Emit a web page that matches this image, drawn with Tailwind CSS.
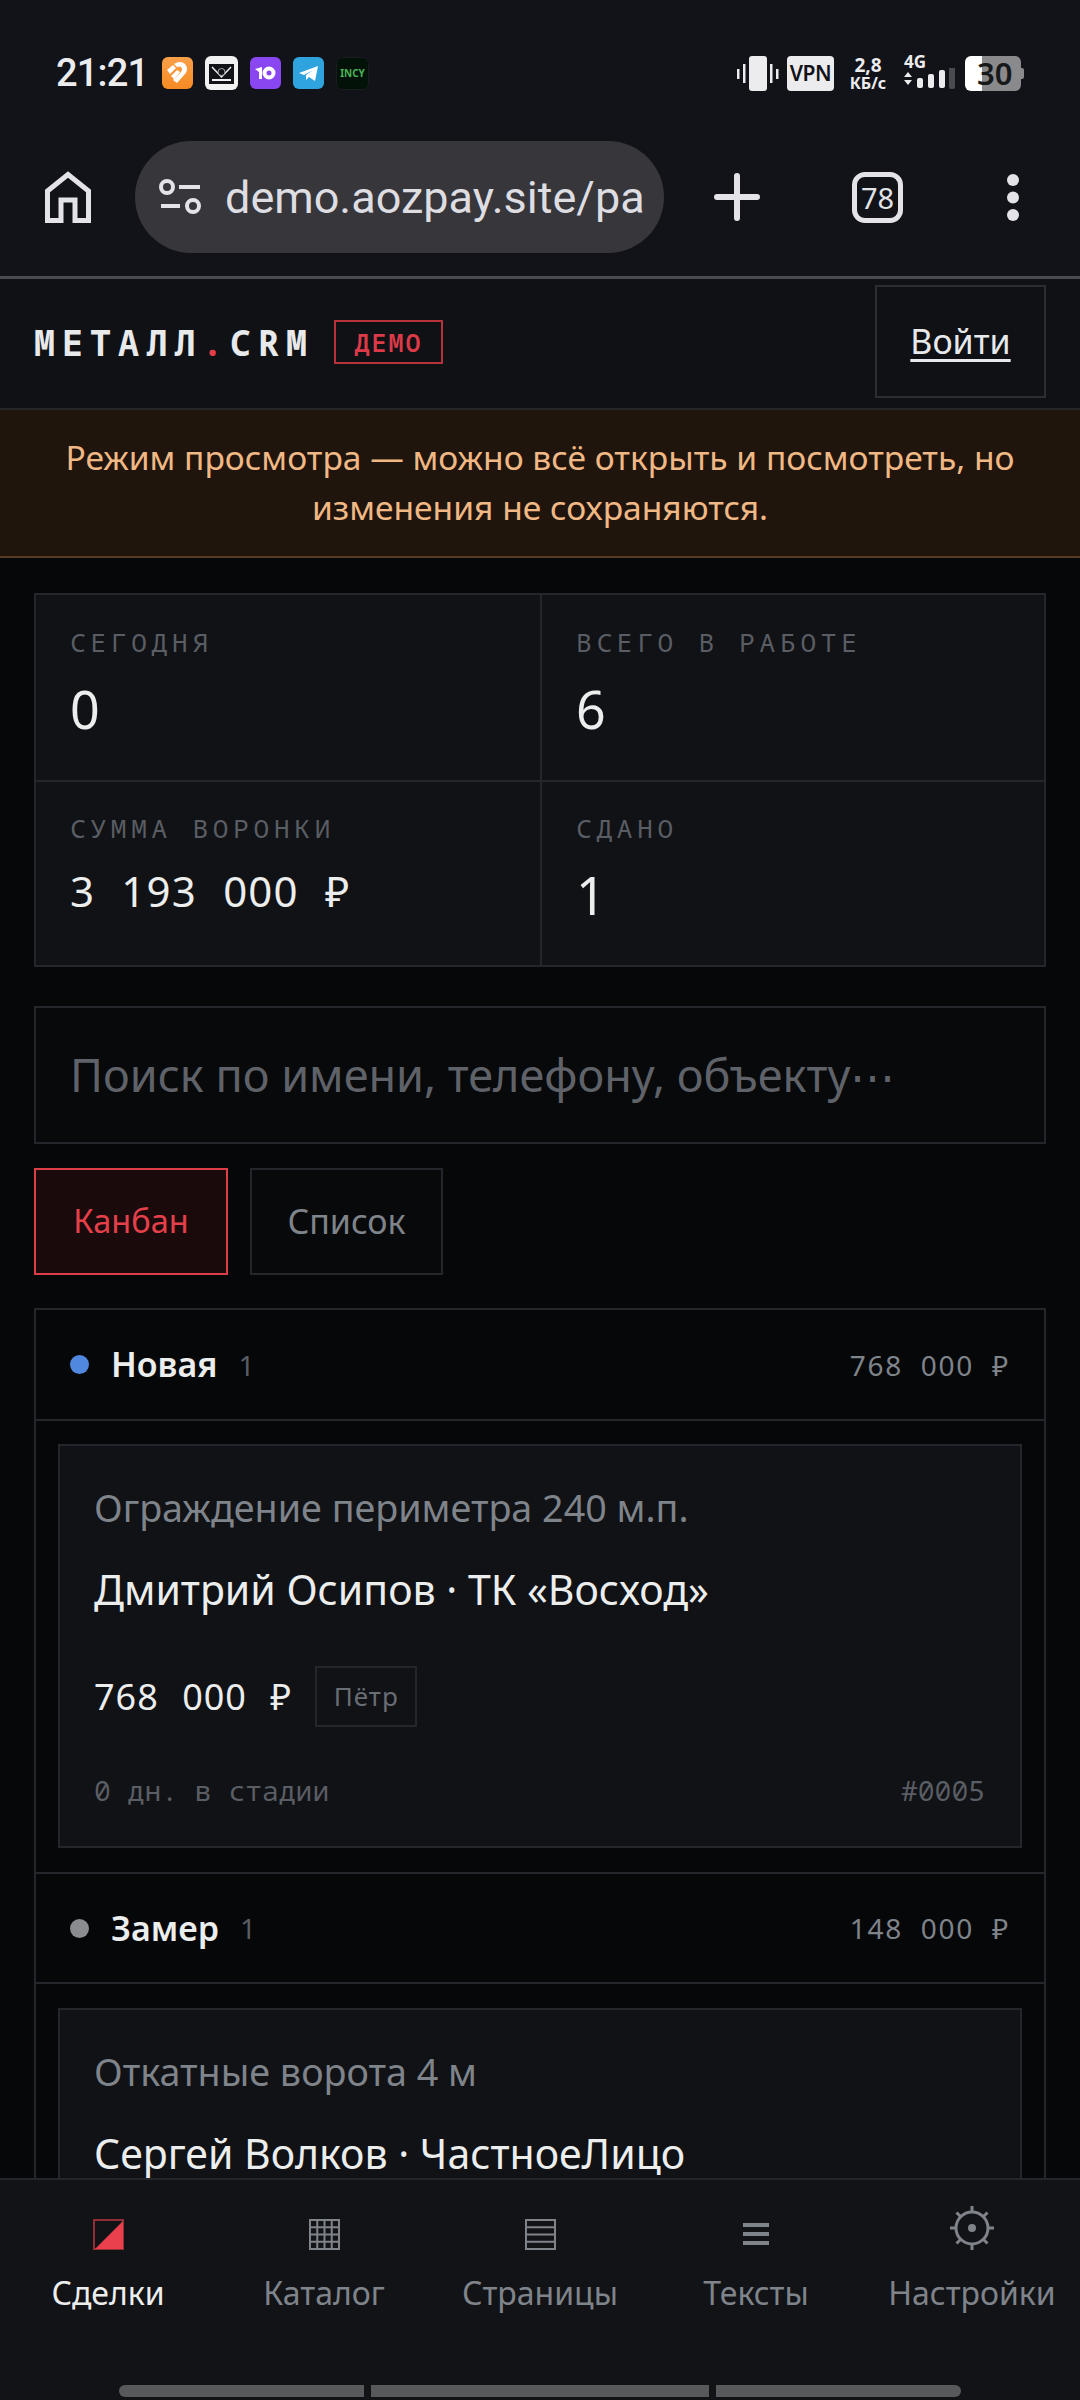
<!DOCTYPE html>
<html lang="ru">
<head>
<meta charset="utf-8">
<script src="https://cdn.jsdelivr.net/npm/@tailwindcss/browser@4"></script>
</head>
<body class="bg-[#060709]">
<div class="w-[1080px] h-[2400px] flex flex-col overflow-hidden bg-[#060709] font-['Noto_Sans',sans-serif] text-[#e8e9eb]">

  <!-- system + browser chrome -->
  <div class="h-[276px] shrink-0 bg-[#121319] pt-[55px]">
    <div class="h-[36px] flex items-center pl-[56px] pr-[56px] justify-between">
      <div class="flex items-center">
        <span class="font-['Roboto',sans-serif] font-medium text-[38px] leading-none tracking-[-0.8px] text-[#ececee] w-[106px]">21:21</span>
        <div class="flex items-center gap-[12px]">
          <svg class="w-[31px] h-[32px]" viewBox="0 0 31 32"><defs><linearGradient id="o" x1="0" y1="0" x2="0" y2="1"><stop offset="0" stop-color="#f9a04a"/><stop offset="1" stop-color="#f58a22"/></linearGradient></defs><rect width="31" height="32" rx="6" fill="url(#o)"/><path d="M5 13L11 8L14 11L8 17ZM12 7Q18 3 23 7Q27 12 23 17L15 26L11 23L19 15Q21 12 19 10Q17 9 15 10Z M9 19L15 13L18 15L12 22Z" fill="#fff"/></svg>
          <svg class="w-[33px] h-[34px]" viewBox="0 0 33 34"><rect width="33" height="34" rx="6" fill="#f1f1f1"/><path d="M4 8H29V28H4Z" fill="#121319"/><path d="M4 8H29L29 11H26L16.500 20L7 11H4Z" fill="#121319"/><path d="M7 11L16.500 21L26 11" fill="none" stroke="#f1f1f1" stroke-width="1.500"/><path d="M7 23H26V25H7Z" fill="#f1f1f1"/><circle cx="16.500" cy="16" r="3.500" fill="#121319" stroke="#aaa" stroke-width="1"/></svg>
          <svg class="w-[31px] h-[32px]" viewBox="0 0 31 32"><rect width="31" height="32" rx="6" fill="#8a46f0"/><path d="M5 12L12 10V22H9V15Z" fill="#fff"/><circle cx="19" cy="16" r="4.500" fill="none" stroke="#fff" stroke-width="4"/></svg>
          <svg class="w-[31px] h-[32px]" viewBox="0 0 31 32"><rect width="31" height="32" rx="6" fill="#2fa3de"/><path d="M6 16L25 9L22 24L16 20L13 23L13 18L20 13L11 18Z" fill="#fff"/></svg>
          <svg class="w-[33px] h-[33px]" viewBox="0 0 33 33"><rect x=".5" y=".5" width="32" height="32" rx="6" fill="#031209" stroke="#1a1d20"/><text x="16.500" y="20" text-anchor="middle" font-family="Noto Sans" font-weight="700" font-size="10" fill="#49b455">INCY</text></svg>
        </div>
      </div>
      <div class="flex items-center">
        <svg class="w-[42px] h-[35px]" viewBox="0 0 42 35"><rect x="12" width="18" height="35" rx="3" fill="#ececee"/><rect x="0" y="13" width="2.500" height="10" fill="#ececee"/><rect x="6" y="8" width="2.500" height="19" fill="#ececee"/><rect x="33" y="8" width="2.500" height="19" fill="#ececee"/><rect x="39" y="13" width="2.500" height="10" fill="#ececee"/></svg>
        <span class="ml-[8px] w-[47px] h-[35px] rounded-[4px] bg-[#ececee] text-[#121319] font-['Noto_Sans'] font-semibold text-[21px] tracking-[-0.5px] flex items-center justify-center leading-none">VPN</span>
        <div class="ml-[15px] w-[38px] flex flex-col items-center font-['Noto_Sans'] font-bold text-[#ececee] leading-none">
          <span class="text-[19px] leading-[20px]">2,8</span>
          <span class="text-[16px] leading-[17px] whitespace-nowrap">КБ/с</span>
        </div>
        <div class="ml-[17px] w-[52px] h-[38px] relative">
          <span class="block font-['Noto_Sans'] font-bold text-[17px] leading-[15px] text-[#ececee]">4G</span>
          <svg class="w-[52px] h-[24px] absolute left-0 top-[14px]" viewBox="0 0 52 24"><path d="M0 9L4 4L8 9ZM0 12H8L4 17Z" fill="#ececee"/><rect x="13" y="10" width="6" height="10" rx="2" fill="#ececee"/><rect x="24" y="6" width="6" height="14" rx="2" fill="#ececee"/><rect x="35" y="2" width="6" height="18" rx="2" fill="#ececee"/><rect x="45" y="-2" width="6" height="23" rx="2" fill="#4a4b50"/></svg>
        </div>
        <div class="ml-[9px] relative w-[59px] h-[35px] flex">
          <div class="w-[17px] h-full bg-white rounded-l-[6px]"></div>
          <div class="w-[39px] h-full bg-[#8a8a8c] rounded-r-[6px]"></div>
          <div class="w-[3px] h-[11px] my-auto bg-[#8a8a8c] rounded-r-[2px]"></div>
          <span class="absolute left-[12px] top-0 h-[35px] flex items-center font-['Noto_Sans'] font-semibold text-[31px] leading-none text-[#17181a]">30</span>
        </div>
      </div>
    </div>
    <div class="mt-[50px] h-[112px] flex items-center">
      <svg class="ml-[45px] w-[46px] h-[52px]" viewBox="0 0 46 52" fill="none" stroke="#e3e3e8" stroke-width="5"><path d="M2.500 49.500V20L23 3.500L43.500 20V49.500H30V29H16V49.500Z"/></svg>
      <div class="ml-[44px] w-[529px] h-[112px] rounded-full bg-[#36363b] flex items-center pl-[24px] overflow-hidden">
        <svg class="w-[43px] h-[36px] shrink-0" viewBox="0 0 43 36" fill="none" stroke="#e3e3e8" stroke-width="4"><circle cx="8" cy="8" r="6"/><path d="M20 8H41M2 27H21"/><circle cx="34" cy="27" r="6"/></svg>
        <span class="ml-[23px] font-['Roboto',sans-serif] text-[45px] leading-none text-[#dddde2] whitespace-nowrap">demo.aozpay.site/pa</span>
      </div>
      <svg class="ml-[50px] w-[46px] h-[48px]" viewBox="0 0 46 48" stroke="#e3e3e8" stroke-width="6" stroke-linecap="round"><path d="M23 3V45M3 24H43"/></svg>
      <div class="ml-[92px] w-[51px] h-[51px] rounded-[13px] border-[5px] border-[#e3e3e8] flex items-center justify-center text-[29px] leading-none text-[#e3e3e8]">78</div>
      <svg class="ml-[104px] w-[12px] h-[47px]" viewBox="0 0 12 47" fill="#e3e3e8"><circle cx="6" cy="6" r="6"/><circle cx="6" cy="23.500" r="6"/><circle cx="6" cy="41" r="6"/></svg>
    </div>
  </div>
  <div class="h-[3px] shrink-0 bg-[#4a4b50]"></div>

  <!-- app header -->
  <header class="h-[131px] shrink-0 bg-[#0f1115] border-b-2 border-[#24262a] flex items-center justify-between pl-[34px] pr-[34px]">
    <div class="flex items-center -mt-[3px]">
      <span class="font-['Noto_Sans_Mono','DejaVu_Sans_Mono',monospace] font-bold text-[35px] leading-none tracking-[7px] text-[#e8e9eb]">МЕТАЛЛ<span class="text-[#e5404a]">.</span>CRM</span>
      <span class="ml-[20px] w-[109px] h-[44px] border-2 border-[#b8323c] text-[#dc3a48] font-['Noto_Sans_Mono','DejaVu_Sans_Mono',monospace] font-semibold text-[25px] tracking-[2px] flex items-center justify-center leading-none">ДЕМО</span>
    </div>
    <a class="w-[171px] h-[113px] border-2 border-[#2a2d33] flex items-center justify-center text-[34px] underline underline-offset-[5px] text-[#e8e9eb] -mt-[4px]">Войти</a>
  </header>

  <!-- demo banner -->
  <div class="h-[148px] shrink-0 bg-[#20150d] border-b-2 border-[#5a3a20] flex items-center justify-center text-center px-[34px] text-[33.6px] leading-[50px] text-[#f0b884]">
    <p class="-mt-[2px]">Режим просмотра — можно всё открыть и посмотреть, но<br>изменения не сохраняются.</p>
  </div>

  <!-- page -->
  <main class="flex-1 min-h-0 overflow-hidden px-[34px] pt-[35px]">
    <section class="grid grid-cols-[506px_1fr] border-2 border-[#24262b] bg-[#101216] h-[374px]">
      <div class="border-r-2 border-b-2 border-[#24262b] pl-[34px] pt-[29px]">
        <div class="font-['Noto_Sans_Mono','DejaVu_Sans_Mono',monospace] text-[26px] tracking-[4.800px] leading-[36px] text-[#5a5d63]">СЕГОДНЯ</div>
        <div class="mt-[14px] text-[52px] leading-[70px] text-[#eceded]">0</div>
      </div>
      <div class="border-b-2 border-[#24262b] pl-[34px] pt-[29px]">
        <div class="font-['Noto_Sans_Mono','DejaVu_Sans_Mono',monospace] text-[26px] tracking-[4.800px] leading-[36px] text-[#5a5d63]">ВСЕГО В РАБОТЕ</div>
        <div class="mt-[14px] text-[52px] leading-[70px] text-[#eceded]">6</div>
      </div>
      <div class="border-r-2 border-[#24262b] pl-[34px] pt-[28px]">
        <div class="font-['Noto_Sans_Mono','DejaVu_Sans_Mono',monospace] text-[26px] tracking-[4.800px] leading-[36px] text-[#5a5d63]">СУММА ВОРОНКИ</div>
        <div class="mt-[13px] text-[42px] leading-[64px] text-[#eceded] [word-spacing:14px] tracking-[1.200px]">3 193 000 ₽</div>
      </div>
      <div class="pl-[34px] pt-[28px]">
        <div class="font-['Noto_Sans_Mono','DejaVu_Sans_Mono',monospace] text-[26px] tracking-[4.800px] leading-[36px] text-[#5a5d63]">СДАНО</div>
        <div class="mt-[14px] text-[52px] leading-[70px] text-[#eceded]">1</div>
      </div>
    </section>

    <div class="mt-[39px] h-[138px] border-2 border-[#24262b] bg-[#08090b] flex items-center pl-[34px] text-[45px] text-[#5f6268] whitespace-nowrap">Поиск по имени, телефону, объекту⋯</div>

    <div class="mt-[24px] flex gap-[22px]">
      <button class="w-[194px] h-[107px] border-2 border-[#dc3f48] bg-[#1a0a0c] text-[32.500px] text-[#e5404a]">Канбан</button>
      <button class="w-[193px] h-[107px] border-2 border-[#24262b] bg-[#08090b] text-[34px] text-[#7f838a]">Список</button>
    </div>

    <section class="mt-[33px] border-2 border-[#24262b] border-b-0">
      <div class="h-[111px] border-b-2 border-[#24262b] flex items-center justify-between pl-[34px] pr-[34px]">
        <div class="flex items-center">
          <span class="w-[19px] h-[19px] rounded-full bg-[#5088df]"></span>
          <span class="ml-[22px] text-[34px] font-semibold text-[#eceded]">Новая</span>
          <span class="ml-[21px] text-[28px] text-[#5a5d63]">1</span>
        </div>
        <span class="font-['Noto_Sans'] text-[28px] text-[#7f838a] [word-spacing:9px] tracking-[1.700px]">768 000 ₽</span>
      </div>
      <div class="px-[22px] pt-[23px] pb-[24px] border-b-2 border-[#24262b]">
        <article class="h-[404px] border-2 border-[#24262b] bg-[#101216] pl-[34px] pr-[35px] pt-[37px]">
          <div class="text-[37.700px] leading-[50px] text-[#7f838a]">Ограждение периметра 240 м.п.</div>
          <div class="mt-[31px] text-[41px] leading-[50px] text-[#eceded]">Дмитрий Осипов · ТК «Восход»</div>
          <div class="mt-[52px] flex items-center">
            <span class="text-[36px] text-[#eceded] [word-spacing:13px] tracking-[1px] leading-[61px]">768 000 ₽</span>
            <span class="ml-[23px] w-[102px] h-[61px] border-2 border-[#24262b] flex items-center justify-center text-[26px] tracking-[1px] text-[#6a6d73]">Пётр</span>
          </div>
          <div class="mt-[45px] flex justify-between font-['Noto_Sans_Mono','DejaVu_Sans_Mono',monospace] text-[28px] leading-[36px] text-[#5a5d63]">
            <span>0 дн. в стадии</span><span>#0005</span>
          </div>
        </article>
      </div>
      <div class="h-[110px] border-b-2 border-[#24262b] flex items-center justify-between pl-[34px] pr-[34px]">
        <div class="flex items-center">
          <span class="w-[19px] h-[19px] rounded-full bg-[#8a8c90]"></span>
          <span class="ml-[22px] text-[34px] font-semibold text-[#eceded]">Замер</span>
          <span class="ml-[21px] text-[28px] text-[#5a5d63]">1</span>
        </div>
        <span class="font-['Noto_Sans'] text-[28px] text-[#7f838a] [word-spacing:9px] tracking-[1.700px]">148 000 ₽</span>
      </div>
      <div class="px-[22px] pt-[24px]">
        <article class="h-[404px] border-2 border-[#24262b] bg-[#101216] pl-[34px] pr-[35px] pt-[37px]">
          <div class="text-[37.700px] leading-[50px] text-[#7f838a]">Откатные ворота 4 м</div>
          <div class="mt-[31px] text-[41px] leading-[50px] text-[#eceded]">Сергей Волков · ЧастноеЛицо</div>
        </article>
      </div>
    </section>
  </main>

  <!-- bottom nav -->
  <nav class="h-[222px] shrink-0 bg-[#121317] border-t-2 border-[#24262b] flex flex-col">
    <div class="grid grid-cols-5 h-[205px]">
      <div class="flex flex-col items-center">
        <div class="h-[70px] flex items-end"><svg class="w-[31px] h-[31px]" viewBox="0 0 31 31"><rect x="1" y="1" width="29" height="29" fill="none" stroke="#e5404a" stroke-opacity=".6" stroke-width="2"/><path d="M2 30L30 2V30Z" fill="#e9404b"/></svg></div>
        <span class="mt-[21px] text-[32px] leading-[44px] text-[#eceded]">Сделки</span>
      </div>
      <div class="flex flex-col items-center">
        <div class="h-[70px] flex items-end"><svg class="w-[31px] h-[31px]" viewBox="0 0 31 31" fill="none" stroke="#7f838a" stroke-width="2"><path d="M1 1H30V30H1ZM1 8.250H30M1 15.500H30M1 22.750H30M8.250 1V30M15.500 1V30M22.750 1V30"/></svg></div>
        <span class="mt-[21px] text-[32px] leading-[44px] text-[#7f838a]">Каталог</span>
      </div>
      <div class="flex flex-col items-center">
        <div class="h-[70px] flex items-end"><svg class="w-[31px] h-[31px]" viewBox="0 0 31 31" fill="none" stroke="#7f838a" stroke-width="2"><path d="M1 1H30V30H1ZM1 8.250H30M1 15.500H30M1 22.750H30"/></svg></div>
        <span class="mt-[21px] text-[32px] leading-[44px] text-[#7f838a]">Страницы</span>
      </div>
      <div class="flex flex-col items-center">
        <div class="h-[70px] flex items-end pb-[5px]"><svg class="w-[26px] h-[22px]" viewBox="0 0 26 22" fill="#7f838a"><rect width="26" height="4"/><rect y="9" width="26" height="4"/><rect y="18" width="26" height="4"/></svg></div>
        <span class="mt-[21px] text-[32px] leading-[44px] text-[#7f838a]">Тексты</span>
      </div>
      <div class="flex flex-col items-center">
        <div class="h-[70px] flex items-end"><svg class="w-[44px] h-[44px]" viewBox="0 0 44 44" fill="none" stroke="#7f838a"><circle cx="22" cy="22" r="16" stroke-width="3"/><circle cx="22" cy="22" r="4" fill="#7f838a" stroke="none"/><path d="M22 0V6M22 38V44M0 22H6M38 22H44M6.500 6.500L10.500 10.500M33.500 33.500L37.500 37.500M37.500 6.500L33.500 10.500M10.500 33.500L6.500 37.500" stroke-width="3"/></svg></div>
        <span class="mt-[21px] text-[32px] leading-[44px] text-[#7f838a] whitespace-nowrap">Настройки</span>
      </div>
    </div>
    <div class="pl-[119px] flex gap-[7px]">
      <div class="w-[245px] h-[12px] bg-[#58595b] rounded-l-full"></div>
      <div class="w-[338px] h-[12px] bg-[#58595b]"></div>
      <div class="w-[245px] h-[12px] bg-[#58595b] rounded-r-full"></div>
    </div>
  </nav>
</div>
</body>
</html>
